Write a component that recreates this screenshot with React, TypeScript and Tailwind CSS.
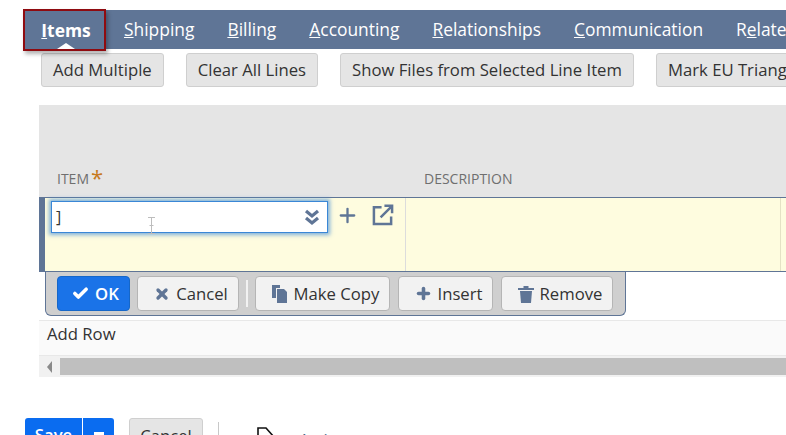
import { Check, Plus, X } from "lucide-react";

const tabs = [
  { pre: "", key: "S", rest: "hipping" },
  { pre: "", key: "B", rest: "illing" },
  { pre: "", key: "A", rest: "ccounting" },
  { pre: "", key: "R", rest: "elationships" },
  { pre: "", key: "C", rest: "ommunication" },
  { pre: "R", key: "e", rest: "lated" },
];

function ToolButton({ children }: { children: React.ReactNode }) {
  return (
    <button className="h-[34px] shrink-0 whitespace-nowrap rounded-[3px] border border-[#cfcfcf] bg-[#e5e5e5] px-[11px] text-[16.7px] text-[#333]">
      {children}
    </button>
  );
}

function ActionButton({ icon, label, className = "" }: { icon: React.ReactNode; label: string; className?: string }) {
  return (
    <button className={`flex h-[35px] items-center justify-center gap-[6px] rounded-[4px] border border-[#b5b5b5] bg-[#f2f2f2] pl-[6px] text-[16.7px] text-[#333] ${className}`}>
      {icon}
      {label}
    </button>
  );
}

export default function App() {
  return (
    <div className="h-[435px] w-[786px] overflow-hidden bg-white font-['Open_Sans',sans-serif]">
      <div className="pt-[10px]">
        <div className="ml-[24px] flex h-[39px] items-center bg-[#5f7596] text-[17.4px] text-white">
          <div className="relative z-10 ml-[-1px] -mt-[1px] flex h-[42px] w-[83px] shrink-0 items-center justify-center self-start border-2 border-[#8f0b10] pl-[3px] font-bold shadow-[2px_3px_4px_rgba(0,0,0,0.3)]">
            <span><u>I</u>tems</span>
            <span className="absolute bottom-0 left-[32px] h-0 w-0 border-x-[9px] border-b-[6px] border-x-transparent border-b-white" />
          </div>
          <div className="ml-[18px] flex gap-[33px] whitespace-nowrap">
            {tabs.map((t) => (
              <span key={t.rest}>
                {t.pre}
                <u>{t.key}</u>
                {t.rest}
              </span>
            ))}
          </div>
        </div>

        <div className="ml-[41px] mt-[4px] flex gap-[22px]">
          <ToolButton>Add Multiple</ToolButton>
          <ToolButton>Clear All Lines</ToolButton>
          <ToolButton>Show Files from Selected Line Item</ToolButton>
          <ToolButton>Mark EU Triangulation</ToolButton>
        </div>

        <div className="ml-[39px] mt-[18px]">
          <div className="flex h-[93px] items-end border-b border-[#5f7596] bg-[#e5e5e5] pb-[8px] text-[14px] text-[#6f6f6f]">
            <div className="flex w-[385px] items-center pl-[18px]">
              ITEM<span className="ml-[2px] -mt-[3px] text-[22px] leading-none text-[#c77a1e]">*</span>
            </div>
            <div>DESCRIPTION</div>
          </div>

          <div className="flex h-[74px] border-b border-[#5f7596] bg-[#fefcdf]">
            <div className="w-[6px] bg-[#5f7596]" />
            <div className="flex w-[361px] border-r border-[#dcdcdc] pl-[6px] pt-[3px]">
              <div className="relative flex h-[32px] w-[277px] items-center justify-between border border-[#3a87d6] bg-white pl-[4px] pr-[7px] text-[16px] text-[#333] shadow-[0_0_4px_2px_rgba(74,144,217,0.7)]">
                ]
                <svg width="16" height="17" viewBox="0 0 16 17" fill="none" stroke="#5f7596" strokeWidth="3.2">
                  <path d="M2 2 8 7 14 2" />
                  <path d="M2 9 8 14 14 9" />
                </svg>
                <svg className="absolute left-[95px] top-[15px]" width="9" height="17" viewBox="0 0 9 17" fill="none" stroke="#bdbdbd">
                  <path d="M1 .5h7M4.5.5v16M1 16.5h7M2.5 8.5h4" />
                </svg>
              </div>
              <Plus className="ml-[8px] mt-[3px] size-[23px] text-[#5f7596]" strokeWidth={2.4} />
              <svg className="ml-[13px] mt-[3px]" width="22" height="22" viewBox="0 0 23 23" fill="none" stroke="#5f7596" strokeWidth="2.6">
                <path d="M10 3.5H2v17.5h18v-8" />
                <path d="M9 14 20.5 2.5M13 1.8h8v8" />
              </svg>
            </div>
            <div className="w-[375px] border-r border-[#e4e2c4]" />
          </div>

          <div className="ml-[6px] flex h-[44px] w-[581px] items-center gap-[7px] rounded-b-[6px] border border-t-0 border-[#5f7596] bg-[#cfcfcf] pl-[11px]">
            <button className="flex h-[35px] w-[73px] items-center justify-center gap-[6px] rounded-[4px] border border-[#1567c9] bg-[#1a73e8] pl-[4px] text-[16.7px] font-semibold text-white">
              <Check className="size-[17px]" strokeWidth={5} />
              OK
            </button>
            <ActionButton className="w-[102px]" label="Cancel" icon={<X className="size-[16px] text-[#5f7596]" strokeWidth={5} />} />
            <div className="h-[27px] w-[2px] bg-[#f2f2f2]" />
            <ActionButton
              className="w-[135px]"
              label="Make Copy"
              icon={
                <svg width="16" height="18" viewBox="0 0 16 18" fill="#5f7596">
                  <path d="M0 0h8v3H4v10H0z" />
                  <path d="M5 4h7l3 3v11H5z" />
                </svg>
              }
            />
            <ActionButton className="ml-px w-[95px]" label="Insert" icon={<Plus className="size-[17px] text-[#5f7596]" strokeWidth={5} />} />
            <ActionButton
              className="ml-px w-[112px]"
              label="Remove"
              icon={
                <svg width="16" height="18" viewBox="0 0 16 18" fill="#5f7596">
                  <path d="M0 3h5.5V1h5v2H16v2H0z" />
                  <path d="M2 6h12l-1 12H3z" />
                </svg>
              }
            />
          </div>

          <div className="mt-[4px] h-[36px] border-y border-[#e8e8e8] bg-[#fafafa] pl-[8px] text-[16.7px] text-[#333]">Add Row</div>
          <div className="flex h-[21px] items-center bg-[#f1f1f1]">
            <div className="ml-[8px] h-0 w-0 border-y-[6px] border-r-[5px] border-y-transparent border-r-[#8a8a8a]" />
            <div className="ml-[8px] h-[17px] flex-1 bg-[#bfbfbf]" />
          </div>
        </div>

        <div className="ml-[25px] mt-[41px] flex items-start text-[16.7px]">
          <div className="flex h-[40px] w-[89px] rounded-[3px] bg-[#0a6cf0] font-semibold text-white">
            <span className="flex w-[57px] justify-center pt-[4px]">Save</span>
            <span className="flex flex-1 justify-center border-l border-white pt-[14px]">
              <span className="h-[3px] w-[10px] bg-white" />
            </span>
          </div>
          <button className="ml-[15px] h-[40px] w-[74px] rounded-[3px] border border-[#cfcfcf] bg-[#e5e5e5] pb-[4px] text-[#333]">Cancel</button>
          <div className="ml-[15px] mt-[4px] h-[30px] w-px bg-[#c8c8c8]" />
          <svg className="ml-[38px] mt-[9px]" width="18" height="24" viewBox="0 0 18 24" fill="none" stroke="#111" strokeWidth="1.6">
            <path d="M1 1h8l8 9v13H1z" />
          </svg>
          <span className="ml-[24px] mt-[9px] text-[#4a6a8a]">Actions</span>
        </div>
      </div>
    </div>
  );
}
